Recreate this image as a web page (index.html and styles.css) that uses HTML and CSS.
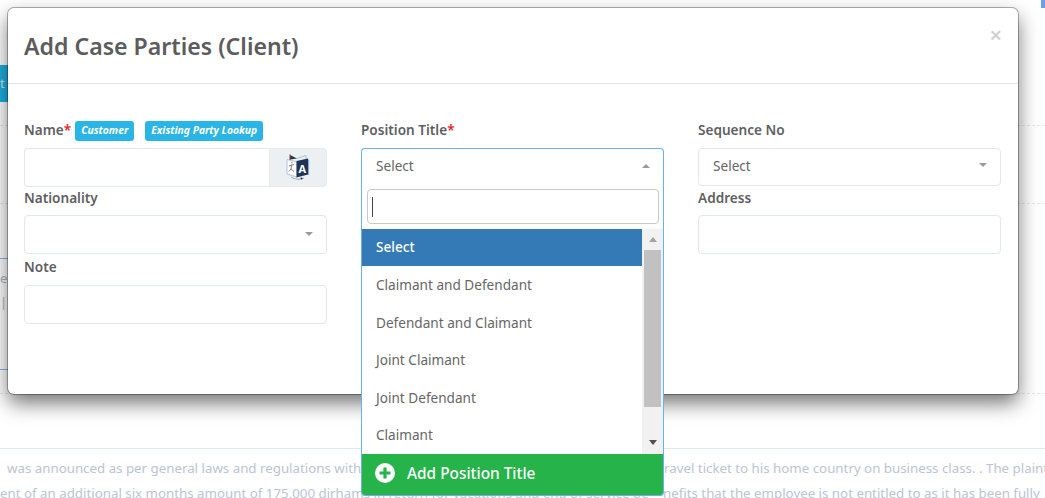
FILE: index.html
```
<!DOCTYPE html>
<html lang="en">
<head>
<meta charset="utf-8">
<title>Add Case Parties (Client)</title>
<link rel="stylesheet" href="styles.css">
</head>
<body>
<div class="page">
  <div class="backdrop">
    <div class="top-blue"></div>
    <div class="bg-btn">t</div>
    <div class="bg-rule bg-rule-a"></div>
    <div class="bg-rule bg-rule-b"></div>
    <div class="bg-blue bg-blue-a"></div>
    <div class="bg-frag">e t</div>
    <div class="bg-frag bg-frag-b">|</div>
    <div class="bg-blue bg-blue-b"></div>
    <div class="bg-rule bg-rule-d"></div>
    <div class="bg-text">
      <div class="bg-line-a"><span class="bg-left">was announced as per general laws and regulations with</span><span class="bg-right">ravel ticket to his home country on business class. . The plaintiff</span></div>
      <div class="bg-line-b"><span class="bg-left-b">ent of an additional six months amount of 175,000 dirhams in return for vacations and end of service be</span><span>nefits that the employee is not entitled to as it has been fully</span></div>
    </div>
  </div>

  <section class="modal">
    <header class="modal-head">
      <h1 class="modal-title">Add Case Parties (Client)</h1>
      <span class="close">×</span>
    </header>
    <div class="modal-body">
      <div class="field">
        <div class="label-row">
          <span class="label">Name<b class="req">*</b></span>
          <span class="badge badge-a">Customer</span>
          <span class="badge">Existing Party Lookup</span>
        </div>
        <div class="input-group">
          <div class="input input-main"></div>
          <div class="addon">
            <svg width="24" height="27" viewBox="0 0 24 27">
              <path d="M1 5.5 L11 8 V23 L1 20 Z" fill="#fff" stroke="#a7bccf" stroke-width=".9"/>
              <path d="M4 1 L11 4.5 L4 5.5 Z" fill="#24324f"/>
              <path d="M4 .5 V6" stroke="#8a4a3a" stroke-width="1.1"/>
              <path d="M11 4.5 L20 1.5 V5" fill="none" stroke="#a7bccf" stroke-width=".9"/>
              <path d="M10.5 7 L22 4.5 V20.5 L10.5 23.5 Z" fill="#1f3358"/>
              <path d="M22.6 5.5 V21" fill="none" stroke="#6fa8dc" stroke-width="1"/>
              <text x="16.3" y="18.5" class="icon-a">A</text>
              <path d="M3 12 L8 10.5 M5.6 10.5 L5 15 L2.8 17.5 M5 15 L8 17.5 M5.6 8 L6.2 9.4" fill="none" stroke="#777" stroke-width=".9"/>
              <path d="M5 23 Q11 27 18 24" fill="none" stroke="#8fa3b5" stroke-width=".9"/>
              <circle cx="15.5" cy="24.6" r="1" fill="#24324f"/>
            </svg>
          </div>
        </div>
      </div>

      <div class="field">
        <div class="label-row"><span class="label">Position Title<b class="req">*</b></span></div>
        <div class="select select-open"><span>Select</span><i class="caret caret-up"></i></div>
      </div>

      <div class="field">
        <div class="label-row"><span class="label">Sequence No</span></div>
        <div class="select"><span>Select</span><i class="caret"></i></div>
      </div>

      <div class="field">
        <div class="label-row row-2"><span class="label">Nationality</span></div>
        <div class="select select-tall"><span></span><i class="caret"></i></div>
      </div>

      <div class="field"></div>

      <div class="field">
        <div class="label-row row-2"><span class="label">Address</span></div>
        <div class="input input-tall"></div>
      </div>

      <div class="field">
        <div class="label-row row-3"><span class="label">Note</span></div>
        <div class="input input-tall"></div>
      </div>
    </div>
  </section>

  <div class="dropdown">
    <div class="search-wrap"><div class="search"><i class="cursor"></i></div></div>
    <div class="list-wrap">
      <ul class="list">
        <li class="item item-active">Select</li>
        <li class="item">Claimant and Defendant</li>
        <li class="item">Defendant and Claimant</li>
        <li class="item">Joint Claimant</li>
        <li class="item">Joint Defendant</li>
        <li class="item">Claimant</li>
      </ul>
      <div class="scrollbar">
        <i class="arrow arrow-up"></i>
        <div class="track"><div class="thumb"></div></div>
        <i class="arrow arrow-down"></i>
      </div>
    </div>
    <div class="add-row">
      <svg width="20" height="20" viewBox="0 0 20 20"><circle cx="10" cy="10" r="10" fill="#fff"/><path d="M10 4.5 V15.5 M4.5 10 H15.5" stroke="#25b34a" stroke-width="3.2"/></svg>
      <span>Add Position Title</span>
    </div>
  </div>
</div>
</body>
</html>
```

FILE: styles.css
```
* { box-sizing: border-box; }
html, body { margin: 0; padding: 0; }
body { font-family: "Noto Sans", "Open Sans", "Liberation Sans", sans-serif; font-size: 13.6px; color: #5f5f5f; background: #fff; }
.page { position: relative; width: 1045px; height: 498px; overflow: hidden; background: #fff; }

.backdrop { height: 498px; display: flow-root; background: #fff; }
.top-blue { width: 4px; height: 8px; margin-left: 1041px; background: #6d9eeb; }
.bg-btn { width: 8px; height: 37px; margin-top: 57px; background: #1fb0e0; color: #cfeaf3; font-size: 13px; line-height: 37px; overflow: hidden; }
.bg-rule { height: 0; border-top: 1px dashed #e8e8e8; }
.bg-rule-a { margin-top: 23px; }
.bg-rule-b { margin-top: 77px; }
.bg-blue { width: 8px; height: 0; border-top: 1px solid #8fb4e0; }
.bg-blue-a { margin-top: 54px; }
.bg-blue-b { margin-top: 57px; }
.bg-rule-d { margin-top: 23px; }
.bg-frag { height: 20px; margin-top: 9px; color: #a9b4c4; font-size: 13px; line-height: 20px; }
.bg-frag-b { margin-top: 4px; }
.bg-text { margin-top: 54px; border-top: 1px solid #dfe8ee; padding-top: 7px; white-space: nowrap; overflow: hidden; color: #bcc3d4; font-size: 13.3px; line-height: 25px; }
.bg-line-a { display: flex; padding-left: 7px; }
.bg-left { flex: none; width: 354px; }
.bg-right { flex: none; margin-left: 303px; }
.bg-line-b { display: flex; }
.bg-left-b { flex: none; width: 663px; }

.modal { position: absolute; left: 8px; top: 8px; width: 1010px; height: 386px; background: #fff; border-radius: 6px; box-shadow: 0 0 0 1px rgba(0,0,0,.3), 0 9px 20px rgba(0,0,0,.55); }
.modal-head { height: 76px; border-bottom: 1px solid #e1e6e8; padding: 21px 16px 0; display: flex; justify-content: space-between; }
.modal-title { margin: 0; font-size: 23.1px; font-weight: 600; line-height: 34px; color: #5c5c5c; }
.close { color: #cfcfcf; font-size: 22px; line-height: 22px; margin: -6px 0 0 0; font-weight: 600; }
.modal-body { display: grid; grid-template-columns: repeat(3, 303px); column-gap: 34px; padding: 35px 16px 0; align-items: start; }
.field { min-width: 0; }
.label-row { height: 29px; display: flex; align-items: flex-start; line-height: 22px; }
.row-2 { height: 28px; }
.row-3 { height: 31px; padding-top: 2px; }
.label { font-weight: 600; color: #5f5f5f; }
.req { color: #ee1c25; font-weight: 600; }
.badge { height: 20px; margin: 2px 0 0 11px; padding: 0 6px; border-radius: 3px; background: #29b6e6; color: #fff; font-size: 10.3px; font-style: italic; font-weight: 700; line-height: 18px; white-space: nowrap; }
.badge-a { margin-left: 4px; }

.input-group { display: flex; height: 39px; }
.input { height: 38px; border: 1px solid #dfe8ea; border-radius: 4px; background: #fff; }
.input-main { flex: 1; height: 39px; border-radius: 4px 0 0 4px; border-right: 0; }
.addon { width: 58px; border: 1px solid #e6eaec; border-radius: 0 4px 4px 0; background: #edf0f2; display: flex; align-items: center; justify-content: center; }
.icon-a { font-size: 11px; font-weight: 700; fill: #fff; text-anchor: middle; }
.input-tall { height: 39px; }
.select { height: 38px; display: flex; align-items: center; justify-content: space-between; padding: 0 13px 4px 14px; border: 1px solid #dfe8ea; border-radius: 4px; background: #fff; color: #666; }
.select-tall { height: 39px; padding-bottom: 2px; }
.select-open { border-color: #6db0e8; border-radius: 4px 4px 0 0; border-bottom: 0; }
.caret { width: 0; height: 0; border: 4px solid transparent; border-top: 4px solid #9a9a9a; border-bottom: 0; }
.caret-up { border-top: 0; border-bottom: 4px solid #9a9a9a; }

.dropdown { position: absolute; left: 361px; top: 186px; width: 303px; height: 310px; border: 1px solid #6db0e8; border-top: 0; border-radius: 0 0 4px 4px; background: #fff; overflow: hidden; display: flex; flex-direction: column; }
.search-wrap { height: 43px; padding: 3px 4px 0 5px; background: #fdfdfd; }
.search { height: 35px; border: 1px solid #c8c8c8; border-radius: 4px; background: #fff; padding: 7px 4px; }
.cursor { display: block; width: 1px; height: 20px; background: #444; }
.list-wrap { height: 225px; display: flex; }
.list { flex: 1; list-style: none; margin: 0; padding: 0; overflow: hidden; }
.item { height: 37.5px; display: flex; align-items: center; padding-left: 14px; color: #666; }
.item-active { height: 37px; padding-bottom: 2px; background: #337ab7; color: #fff; font-weight: 500; }
.scrollbar { width: 21px; background: #f1f1f1; display: flex; flex-direction: column; align-items: center; padding-top: 8px; }
.arrow { width: 0; height: 0; border: 4.5px solid transparent; flex: none; }
.arrow-up { border-top: 0; border-bottom: 5px solid #a3a3a3; }
.arrow-down { border-bottom: 0; border-top: 5px solid #505050; margin-top: 33px; }
.track { height: 157px; width: 17px; margin-top: 8px; flex: none; }
.thumb { height: 100%; background: #c1c1c1; }
.add-row { height: 41px; padding: 0 0 3px 13px; background: #25b34a; color: #fff; display: flex; align-items: center; gap: 12px; font-size: 15.4px; font-weight: 500; }
```
